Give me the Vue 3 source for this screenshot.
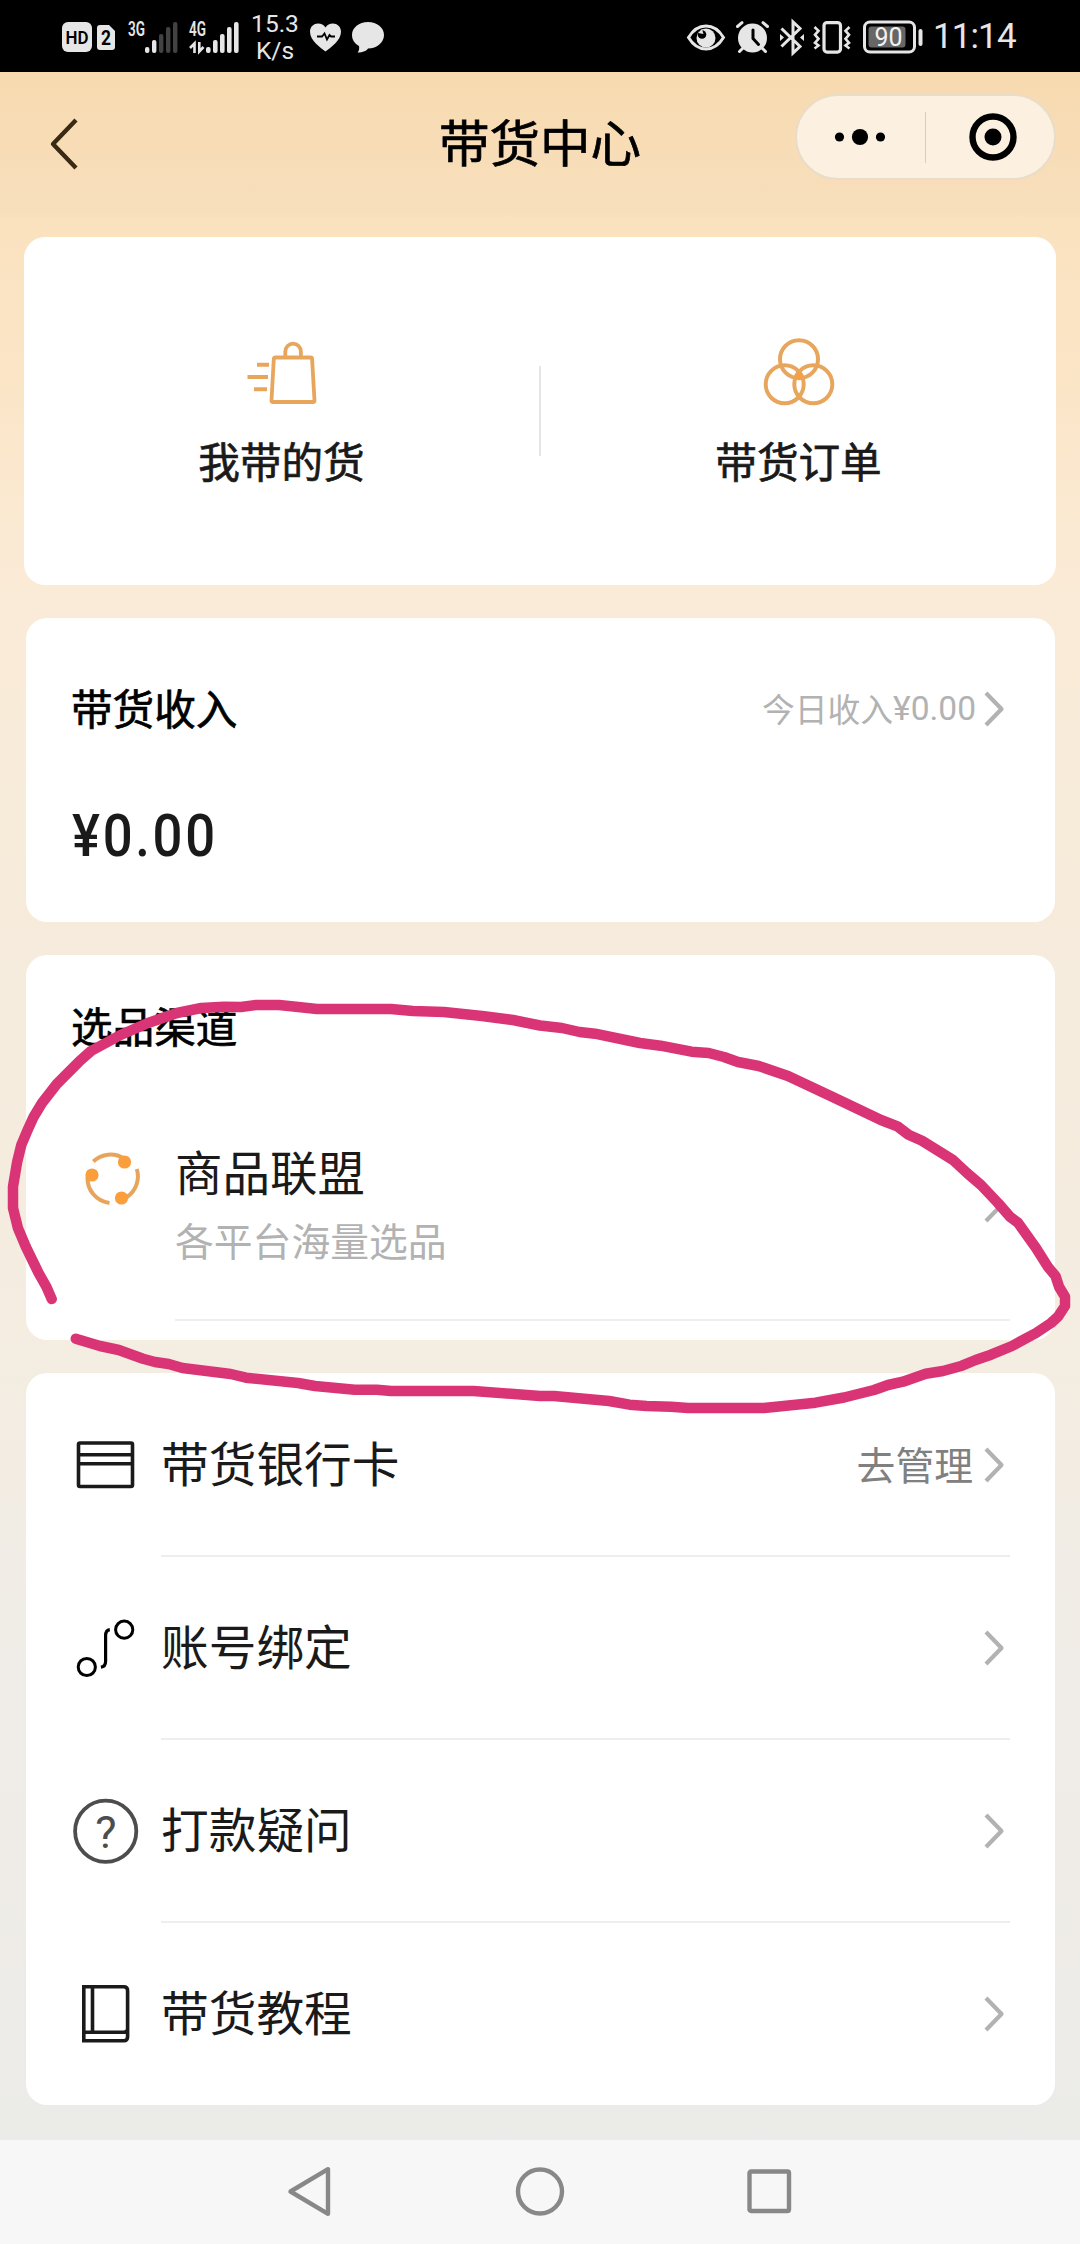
<script setup>
const bars = [
  { x: 17, y: 26, h: 6 },
  { x: 24, y: 19, h: 13 },
  { x: 31, y: 13, h: 19 },
  { x: 38, y: 6, h: 26 },
  { x: 45, y: 1, h: 31 },
]

const menu = [
  { id: 'card', label: '带货银行卡', extra: '去管理' },
  { id: 'bind', label: '账号绑定' },
  { id: 'help', label: '打款疑问' },
  { id: 'book', label: '带货教程' },
]

// Freehand marker stroke, in page pixels
const ink = [
  [51.7, 1299], [46.5, 1287], [38.6, 1273], [25.8, 1246.7], [17.9, 1228], [13, 1208], [13, 1186.7],
  [17.2, 1161.7], [21.3, 1145], [26.9, 1131.7], [33.7, 1116.7], [42, 1103], [56.8, 1084], [79, 1061.7],
  [91, 1051], [120.5, 1035], [148, 1023], [177, 1013], [201.4, 1008], [224, 1006.7], [241, 1007],
  [256.5, 1005], [279, 1005], [296, 1006.7], [317, 1009], [391, 1009], [413, 1011], [444, 1012],
  [482, 1016], [513, 1020], [540, 1025.5], [562, 1028], [579.6, 1032], [595, 1033.7], [640, 1043],
  [660.5, 1045.7], [691.5, 1051.7], [708.7, 1053], [724, 1057], [738, 1062], [758.7, 1066], [788, 1076],
  [832.7, 1097], [881, 1120], [898, 1126.7], [908.5, 1134.7], [922, 1140.7], [953, 1160], [967, 1173],
  [981, 1185], [998, 1203], [1010, 1216.7], [1018, 1222.7], [1036, 1248], [1048, 1267], [1055.5, 1276],
  [1059, 1286.7], [1065, 1296.7], [1065, 1306], [1058, 1316.7], [1051, 1323], [1036, 1333], [1012, 1346],
  [991, 1354.7], [975.6, 1360], [962, 1365.7], [943, 1371], [925.7, 1373.7], [903, 1381.7], [888, 1385],
  [874, 1390], [844, 1397.5], [815.5, 1402.7], [764, 1408], [688, 1408], [671, 1406.7], [646.7, 1406],
  [629.5, 1404.7], [609, 1401], [554, 1396], [540, 1396], [527, 1395], [473.5, 1391], [391, 1391],
  [377, 1389.7], [354.7, 1389.7], [315, 1386], [298, 1383], [246, 1377.7], [230.7, 1374], [182.5, 1368],
  [168.7, 1364], [155, 1362], [143, 1358.7], [118.8, 1350], [100, 1346], [75.8, 1338.7],
].map((p) => p.join(',')).join(' ')
</script>

<template>
  <div class="screen">
    <div class="status">
      <div class="status-left">
        <svg class="i-hd" width="30" height="30" viewBox="0 0 30 30">
          <rect width="30" height="30" rx="6" fill="#e6e6e6" />
          <text x="15" y="22" text-anchor="middle" font-size="19" font-weight="600" fill="#000" textLength="23" lengthAdjust="spacingAndGlyphs">HD</text>
        </svg>
        <svg class="i-sim" width="18" height="25" viewBox="0 0 18 25">
          <path d="M3 0h9l6 6v16a3 3 0 0 1-3 3H3a3 3 0 0 1-3-3V3a3 3 0 0 1 3-3z" fill="#e6e6e6" />
          <text x="9" y="20" text-anchor="middle" font-size="20.500" font-weight="700" fill="#000" textLength="10" lengthAdjust="spacingAndGlyphs">2</text>
        </svg>
        <svg class="i-3g" width="50" height="36" viewBox="0 -4 50 36">
          <text x="0" y="14.500" font-size="19.500" font-weight="600" fill="#e6e6e6" textLength="17" lengthAdjust="spacingAndGlyphs">3G</text>
          <rect v-for="(b, i) in bars" :key="i" :x="b.x" :y="b.y" width="4.400" :height="b.h" rx="2" :fill="i < 2 ? '#e6e6e6' : '#424242'" />
        </svg>
        <svg class="i-4g" width="50" height="36" viewBox="0 -4 50 36">
          <text x="0" y="14.500" font-size="19.500" font-weight="600" fill="#e6e6e6" textLength="17" lengthAdjust="spacingAndGlyphs">4G</text>
          <path d="M5.500 32V22.500L1 27M10.300 21v9.500l4.200-4.500" fill="none" stroke="#e6e6e6" stroke-width="2.600" />
          <rect v-for="(b, i) in bars" :key="i" :x="b.x" :y="b.y" width="4.600" :height="b.h" rx="2" fill="#e6e6e6" />
        </svg>
        <div class="speed"><span>15.3</span><span>K/s</span></div>
        <svg class="i-heart" width="31" height="29" viewBox="0 0 31 29">
          <path d="M15.500 28.500C11 25 0 18 0 8.800 0 3.500 4 .5 8 .5c3.200 0 6 1.500 7.500 4C17 2 19.800.5 23 .5c4 0 8 3 8 8.300 0 9.200-11 16.200-15.500 19.700z" fill="#e6e6e6" />
          <path d="M7 13.500h5l2.500-3 2.500 6 2.500-4.500 1.500 1.500h4" fill="none" stroke="#000" stroke-width="1.800" />
        </svg>
        <svg class="i-chat" width="32" height="31" viewBox="0 0 32 31">
          <path d="M16 0c9 0 16 5.600 16 13s-7 13.500-16 13.500c-1 2-5 4-10.500 4 1.500-1.500 2-4 1.500-6.500C2.800 21.600 0 18 0 13 0 5.600 7 0 16 0z" fill="#e6e6e6" />
        </svg>
      </div>
      <div class="status-right">
        <svg width="38" height="27" viewBox="0 0 38 27">
          <path d="M1.500 13.500C6 6 12 2 19 2s13 4 17.500 11.500C32 21 26 25 19 25S6 21 1.500 13.500z" fill="none" stroke="#e6e6e6" stroke-width="3" />
          <circle cx="19" cy="14" r="9.500" fill="#e6e6e6" />
          <circle cx="15" cy="10.500" r="4.300" fill="#000" />
          <path d="M11 9l4-4 1.500 5z" fill="#e6e6e6" />
        </svg>
        <svg class="i-alarm" width="33" height="32" viewBox="0 0 33 32">
          <circle cx="16.500" cy="17" r="14.500" fill="#e6e6e6" />
          <path d="M1.500 5.500l4.500-3.800M31.500 5.500L27 1.700M7 27l-3.500 3.500M26 27l3.500 3.500" stroke="#e6e6e6" stroke-width="3" stroke-linecap="round" />
          <path d="M17 9v8.500l5.500 6" fill="none" stroke="#000" stroke-width="3" stroke-linecap="round" />
        </svg>
        <svg class="i-bt" width="24" height="35" viewBox="0 0 24 35">
          <path d="M1.500 8.500l18.500 18-7 6.500V2l7 6.500-18.500 18" fill="none" stroke="#e6e6e6" stroke-width="3" />
          <path d="M0 14l4 3.500L0 21zM24 14l-4 3.500 4 3.500z" fill="#e6e6e6" />
        </svg>
        <svg class="i-vib" width="38" height="33" viewBox="0 0 38 33">
          <rect x="11" y="1.600" width="16.500" height="29.500" rx="3" fill="none" stroke="#e6e6e6" stroke-width="3.200" />
          <path d="M1.500 6l4 3.800-3.500 4 3.500 4-3.500 4 3.500 2.700-4 3M36.500 6l-4 3.800 3.500 4-3.500 4 3.500 4-3.500 2.700 4 3" fill="none" stroke="#e6e6e6" stroke-width="2.600" />
        </svg>
        <svg class="i-batt" width="60" height="34" viewBox="0 0 60 34">
          <rect x="1.500" y="2" width="50" height="30" rx="5.500" fill="none" stroke="#e6e6e6" stroke-width="3" />
          <rect x="5.500" y="6.500" width="37" height="21" rx="3" fill="#666" />
          <rect x="55.500" y="9" width="4" height="17" rx="2" fill="#e6e6e6" />
          <text x="25.500" y="26" text-anchor="middle" font-size="26" fill="#f2f2f2" textLength="28" lengthAdjust="spacingAndGlyphs">90</text>
        </svg>
        <span class="time">11:14</span>
      </div>
    </div>

    <header class="nav">
      <svg class="back" width="29" height="52" viewBox="0 0 29 52">
        <path d="M26 2L3 26l23 24" fill="none" stroke="#3a2a14" stroke-width="4.400" stroke-linejoin="round" />
      </svg>
      <h1>带货中心</h1>
      <div class="capsule">
        <svg class="dots" width="52" height="18" viewBox="0 0 52 18">
          <circle cx="5.500" cy="9" r="4.600" /><circle cx="26" cy="9" r="8.100" /><circle cx="46.500" cy="9" r="4.600" />
        </svg>
        <i class="cap-line"></i>
        <svg class="target" width="48" height="48" viewBox="0 0 48 48">
          <circle cx="24" cy="24" r="20.500" fill="none" stroke="#000" stroke-width="6.400" /><circle cx="24" cy="24" r="8.500" />
        </svg>
      </div>
    </header>

    <main>
      <section class="card tabs">
        <div class="tab">
          <svg width="70" height="72" viewBox="0 0 70 72" fill="none" stroke="#e8a65c" stroke-width="4">
            <path d="M28.500 22.500h35q1.500 0 1.600 1.500l2.400 41.500q0 1.500-1.500 1.500H26q-1.500 0-1.500-1.500l2.300-41.500q.2-1.500 1.700-1.500zM38.300 22v-5.500a7.800 7.800 0 0 1 15.600 0V22" stroke-width="3.800" />
            <path d="M10 29.700h12M.5 42h20.500M7 54.300h13" />
          </svg>
          <span>我带的货</span>
        </div>
        <i class="tab-line"></i>
        <div class="tab">
          <svg width="72" height="72" viewBox="0 0 72 72" fill="none" stroke="#e8a65c" stroke-width="4">
            <circle cx="36" cy="24.200" r="19" /><circle cx="21.700" cy="49.300" r="19" /><circle cx="50.300" cy="49.300" r="19" />
            <circle cx="36" cy="41" r="3.600" fill="#f5a047" stroke="none" />
          </svg>
          <span>带货订单</span>
        </div>
      </section>

      <section class="card income">
        <div class="income-head">
          <h2>带货收入</h2>
          <div class="today">
            <span>今日收入</span><b>¥0.00</b>
            <svg class="chev" width="20" height="36" viewBox="0 0 20 36"><path d="M2 2l15.500 16L2 34" /></svg>
          </div>
        </div>
        <div class="amount">¥0.00</div>
      </section>

      <section class="card channel">
        <h2>选品渠道</h2>
        <div class="union">
          <svg class="union-icon" width="54" height="54" viewBox="0 0 54 54" fill="none" stroke="#e8a45a" stroke-width="4">
            <path d="M8.300 10.500A25 25 0 0 1 39 7.500M2.500 26A25 25 0 0 0 24.500 52M51.800 18a25 25 0 0 1-9.800 28" />
            <g fill="#fa9f3c" stroke="none"><circle cx="39.500" cy="11" r="6.600" /><circle cx="7" cy="24" r="6.600" /><circle cx="36.500" cy="47" r="6.600" /></g>
          </svg>
          <div class="union-body">
            <div>
              <div class="union-name">商品联盟</div>
              <div class="union-sub">各平台海量选品</div>
            </div>
            <svg class="chev" width="20" height="36" viewBox="0 0 20 36"><path d="M2 2l15.500 16L2 34" /></svg>
          </div>
        </div>
      </section>

      <section class="card menu">
        <div v-for="m in menu" :key="m.id" class="row">
          <svg class="row-icon" width="66" height="66" viewBox="0 0 66 66" fill="none" stroke="#1a1a1a" stroke-width="3.600">
            <g v-if="m.id === 'card'">
              <rect x="5.500" y="11" width="54" height="43.500" rx="1.500" />
              <path d="M5.500 22.800h54M5.500 31.800h54" />
            </g>
            <g v-else-if="m.id === 'bind'" stroke="#000" stroke-width="3">
              <circle cx="13.800" cy="52" r="8.600" /><circle cx="51.200" cy="14.700" r="8.600" />
              <path d="M36.800 14.700q-4.200.6-4.200 6v25.500q0 5.400-4.700 6" stroke-width="3.200" />
            </g>
            <g v-else-if="m.id === 'help'">
              <circle cx="32.700" cy="33.200" r="30.600" stroke="#4d4d4d" stroke-width="3.800" />
              <text x="33" y="49.500" text-anchor="middle" font-size="45" fill="#4d4d4d" stroke="none">?</text>
            </g>
            <g v-else>
              <path d="M10.800 5.800h40q3.800 0 3.800 4v46q0 4-3.800 4h-40zM10.800 51.300h40q3.800 0 3.800-3.500M19.500 6v45" />
            </g>
          </svg>
          <div class="row-body">
            <span class="row-label">{{ m.label }}</span>
            <span v-if="m.extra" class="row-extra">{{ m.extra }}</span>
            <svg class="chev" width="20" height="36" viewBox="0 0 20 36"><path d="M2 2l15.500 16L2 34" /></svg>
          </div>
        </div>
      </section>
    </main>

    <footer class="sysnav">
      <svg width="50" height="50" viewBox="0 0 50 50"><path d="M43 3.200v44.600L5.500 25.500z" stroke-linejoin="round" /></svg>
      <svg width="50" height="50" viewBox="0 0 50 50"><circle cx="25" cy="25.500" r="22" /></svg>
      <svg width="50" height="50" viewBox="0 0 50 50"><rect x="4.500" y="5.500" width="39.500" height="39.500" rx="1.500" /></svg>
    </footer>

    <svg class="ink" width="1080" height="2244" viewBox="0 0 1080 2244">
      <polyline :points="ink" />
    </svg>
  </div>
</template>

<style>
body { margin: 0; }
</style>

<style scoped>
.screen {
  position: relative;
  width: 1080px;
  height: 2244px;
  overflow: hidden;
  display: flex;
  flex-direction: column;
  font-family: "Noto Sans CJK SC", "Noto Sans", sans-serif;
  background: linear-gradient(#f8dab0 72px, #f7dfbc 214px, #fae2bf 218px, #fbe5c7 380px, #faebd7 590px, #f6ebdc 940px, #f4ede1 1350px, #f0ece7 1650px, #efece7 1900px, #ebebe9 2140px);
}
svg { display: block; flex: none; overflow: visible; }
svg text { font-family: Roboto, sans-serif; }
h1, h2 { margin: 0; font-weight: 400; -webkit-text-stroke: 0.700px currentColor; }

.status {
  box-sizing: border-box;
  height: 72px;
  flex: none;
  padding: 2px 61px 0 62px;
  background: #000;
  display: flex;
  justify-content: space-between;
  align-items: center;
}
.status-left, .status-right { display: flex; align-items: center; }
.i-sim { margin-left: 5px; }
.i-3g { margin: -4px 0 0 13px; }
.i-4g { margin: -4px 0 0 11px; }
.speed {
  width: 46px;
  margin-left: 13px;
  margin-top: -21px;
  height: 34px;
  display: flex;
  flex-direction: column;
  align-items: center;
  font: 24.500px/27px Roboto, sans-serif;
  color: #e6e6e6;
}
.i-heart { margin-left: 12px; }
.i-chat { margin-left: 11px; }
.i-alarm, .i-bt { margin-left: 11px; }
.i-vib { margin-left: 9px; }
.i-batt { margin-left: 12px; }
.time {
  margin-left: 10px;
  width: 86px;
  font: 400 35px/40px Roboto, sans-serif;
  letter-spacing: -0.900px;
  color: #e6e6e6;
  white-space: nowrap;
}

.nav {
  height: 165px;
  flex: none;
  display: grid;
  grid-template-columns: 1fr auto 1fr;
  align-items: start;
}
.back { margin: 46px 0 0 50px; }
.nav h1 { font-size: 50.500px; line-height: 70px; margin-top: 33px; color: #000; }
.capsule {
  box-sizing: border-box;
  justify-self: end;
  width: 261px;
  height: 86px;
  margin: 22px 24px 0 0;
  border: 2px solid #e9dcc8;
  border-radius: 43px;
  background: #fcf0e0;
  display: flex;
  align-items: center;
}
.dots { margin-left: 37px; }
.cap-line { width: 1px; height: 51px; margin-left: 39px; background: #d8cdbe; }
.target { margin-left: 43px; }

main { flex: none; display: flex; flex-direction: column; gap: 33px; padding: 0 25px 0 26px; }
.card { box-sizing: border-box; background: #fff; border-radius: 21px; }
h2 { font-size: 41.600px; line-height: 60px; color: #000; }
.chev path { fill: none; stroke: #b2b2b2; stroke-width: 4.200; stroke-linejoin: round; }

.tabs { margin: 0 -1px 0 -2px; height: 348px; display: flex; align-items: flex-start; }
.tab { flex: 1; display: flex; flex-direction: column; align-items: center; padding-top: 98px; }
.tab span { margin-top: 23px; font-size: 41.600px; line-height: 60px; -webkit-text-stroke: 0.700px currentColor; color: #1a1a1a; }
.tab-line { width: 2px; height: 90px; margin-top: 129px; background: #e5e5e5; }

.income { height: 304px; padding: 58px 51px 0 46px; }
.income-head { display: flex; justify-content: space-between; align-items: center; }
.income-head h2 { margin-left: -1px; }
.today { display: flex; align-items: center; color: #b2b2b2; padding-top: 9px; }
.today span { font-size: 32.800px; line-height: 46px; padding-bottom: 6px; }
.today b { font: 400 33.500px/46px Roboto, sans-serif; padding-bottom: 5px; }
.today .chev { margin-left: 8px; margin-bottom: 4px; }
.amount {
  margin-top: 66px;
  font: 500 58.500px/66px Roboto, sans-serif;
  letter-spacing: 3px;
  color: #1a1a1a;
  transform: scaleX(0.9);
  transform-origin: left;
}

.channel { height: 385px; padding: 40px 45px 0 46px; }
.channel h2 { margin-left: -1px; }
.union { display: flex; align-items: flex-start; }
.union-icon { margin: 96px 0 0 13px; }
.union-body {
  flex: 1;
  height: 264px;
  margin-left: 36px;
  border-bottom: 2px solid #eee;
  display: flex;
  justify-content: space-between;
  align-items: flex-start;
}
.union-name { margin-top: 83px; font-size: 47.500px; line-height: 66px; color: #1a1a1a; }
.union-sub { margin-top: 7px; font-size: 38.800px; line-height: 56px; color: #b2b2b2; }
.union-body .chev { margin: 132px 6px 0 0; }

.menu { height: 732px; display: flex; flex-direction: column; }
.row { height: 183px; display: flex; align-items: center; padding: 0 45px 0 47px; }
.row-body {
  box-sizing: border-box;
  flex: 1;
  height: 184px;
  margin-left: 22px;
  padding-right: 6px;
  border-bottom: 2px solid #eee;
  display: flex;
  align-items: center;
}
.row-body .chev { margin-top: 2px; }
.row:last-child .row-body { border-bottom-color: transparent; }
.row-label { flex: 1; font-size: 47.700px; line-height: 66px; padding-bottom: 3px; color: #1a1a1a; }
.row-extra { font-size: 38.800px; line-height: 56px; padding-bottom: 2px; margin-right: 11px; color: #808080; }

.sysnav {
  height: 104px;
  flex: none;
  margin-top: 35px;
  background: #f7f7f7;
  display: flex;
  justify-content: center;
  gap: 180px;
}
.sysnav svg { margin-top: 26px; fill: none; stroke: #888; stroke-width: 4.400; }

.ink { position: absolute; left: 0; top: 0; pointer-events: none; }
.ink polyline { fill: none; stroke: #d93475; stroke-width: 10.500; stroke-linecap: round; stroke-linejoin: round; }
</style>
